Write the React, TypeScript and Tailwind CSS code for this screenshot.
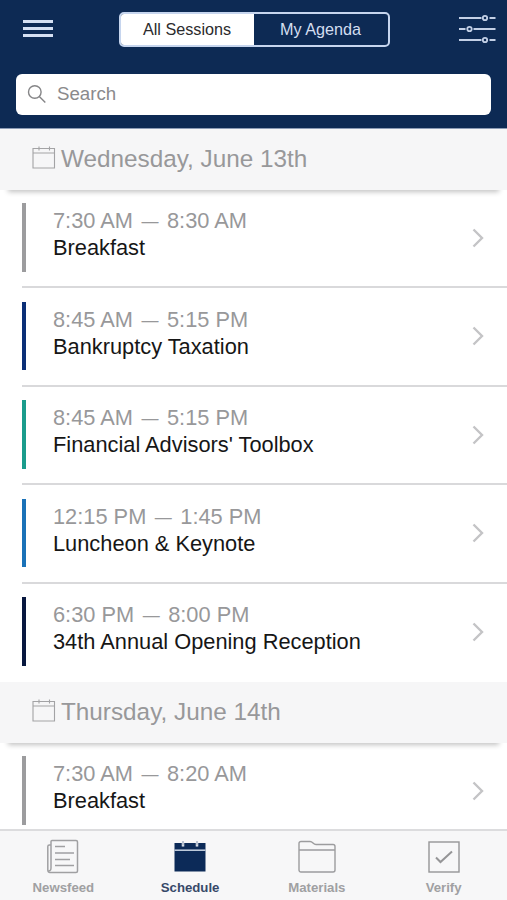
import React from 'react';

type Session = { start: string; end: string; title: string; bar: string };
type Day = { label: string; sessions: Session[] };

const days: Day[] = [
  {
    label: 'Wednesday, June 13th',
    sessions: [
      { start: '7:30 AM', end: '8:30 AM', title: 'Breakfast', bar: 'bg-[#9c9c9e]' },
      { start: '8:45 AM', end: '5:15 PM', title: 'Bankruptcy Taxation', bar: 'bg-[#0b2f77]' },
      { start: '8:45 AM', end: '5:15 PM', title: "Financial Advisors' Toolbox", bar: 'bg-[#1a9c8c]' },
      { start: '12:15 PM', end: '1:45 PM', title: 'Luncheon & Keynote', bar: 'bg-[#1a72b8]' },
      { start: '6:30 PM', end: '8:00 PM', title: '34th Annual Opening Reception', bar: 'bg-[#08183f]' },
    ],
  },
  {
    label: 'Thursday, June 14th',
    sessions: [{ start: '7:30 AM', end: '8:20 AM', title: 'Breakfast', bar: 'bg-[#9c9c9e]' }],
  },
];

const FilterIcon = () => (
  <svg className="w-[38px] h-[30px]" viewBox="0 0 38 30" fill="none" stroke="#c3d0e6" strokeWidth="1.8">
    <path d="M1 4h22.5M31.5 4H37.5M1 15h6.5M15.5 15H37.5M1 26h22.5M31.5 26H37.5" />
    <circle cx="27" cy="4" r="2.2" />
    <circle cx="11.5" cy="15" r="2.2" />
    <circle cx="27" cy="26" r="2.2" />
  </svg>
);

const SearchIcon = () => (
  <svg className="w-5 h-5" viewBox="0 0 20 20" fill="none" stroke="#858587" strokeWidth="1.4">
    <circle cx="7.8" cy="8" r="6.3" />
    <path d="M12.3 12.6l6 5.9" />
  </svg>
);

const CalendarIcon = () => (
  <svg className="w-6 h-6 mb-[5px]" viewBox="0 0 24 24" fill="none" stroke="#a3a3a5" strokeWidth="1.1">
    <path d="M1 3.5h21.5v19.5H1zM1 8h21.5M7 1.5v4M17.5 1.5v4" />
  </svg>
);

const Chevron = () => (
  <svg className="w-3 h-5" viewBox="0 0 12 20" fill="none" stroke="#c4c4c6" strokeWidth="2.4">
    <path d="M1.5 1.5L10 10l-8.500 8.500" />
  </svg>
);

const NewsIcon = () => (
  <svg className="w-8 h-9" viewBox="0 0 32 36" fill="none" stroke="#a0a0a2" strokeWidth="1.5">
    <path d="M5 2.500h24a1.500 1.500 0 0 1 1.500 1.500v29a1.500 1.500 0 0 1-1.500 1.500H3A2.500 2.500 0 0 1 .8 32V8.500A1.500 1.500 0 0 1 2.300 7H4" />
    <path d="M4 30V3.500a1 1 0 0 1 1-1M4 30c0 3-2 3.500-2 2" />
    <path d="M8 8.500h10M8 15h19M8 21.500h15M8 27.500h19" />
  </svg>
);

const ScheduleIcon = () => (
  <svg className="w-8 h-9" viewBox="0 0 32 36" fill="none">
    <path d="M.5 5h31v28.500H.5z" fill="#0c2a58" />
    <path d="M.5 12.200h31" stroke="#c8d2e2" strokeWidth="1.500" />
    <path d="M9 3v5.500M23 3v5.500" stroke="#f0f3f7" strokeWidth="2.500" />
    <path d="M9 3v4.500M23 3v4.500" stroke="#8291ab" strokeWidth="1" />
  </svg>
);

const FolderIcon = () => (
  <svg className="w-[38px] h-9" viewBox="0 0 38 36" fill="none" stroke="#9c9c9e" strokeWidth="1.4">
    <path d="M1 32V5.500a2 2 0 0 1 2-2h9c3 0 3 3 6 3h17a2 2 0 0 1 2 2V32a2 2 0 0 1-2 2H3a2 2 0 0 1-2-2zM1 12h36" />
  </svg>
);

const VerifyIcon = () => (
  <svg className="w-8 h-9" viewBox="0 0 32 36" fill="none" stroke="#959597">
    <rect x="1" y="4" width="30" height="30" strokeWidth="1.4" />
    <path d="M8 19.500l4.500 4.500L24 13.500" strokeWidth="2" />
  </svg>
);

const tabs = [
  { label: 'Newsfeed', Icon: NewsIcon, active: false },
  { label: 'Schedule', Icon: ScheduleIcon, active: true },
  { label: 'Materials', Icon: FolderIcon, active: false },
  { label: 'Verify', Icon: VerifyIcon, active: false },
];

const SessionRow: React.FC<{ session: Session; last: boolean }> = ({ session, last }) => (
  <div className={`ml-[22px] h-[98.5px] flex items-start border-[#d9d9db] ${last ? '' : 'border-b-2'}`}>
    <div className={`w-1 h-[68.5px] mt-[13.5px] shrink-0 ${session.bar}`} />
    <div className="ml-[27px] mt-[17.5px] flex-1 text-[21.8px] leading-[27px] whitespace-nowrap">
      <p className="text-[#98989a]">
        {session.start}
        <span className="inline-block w-[34px] text-center text-[17px] leading-none relative -top-px">—</span>
        {session.end}
      </p>
      <p className="text-[#161616]">{session.title}</p>
    </div>
    <div className="mt-[38px] mr-[23px]">
      <Chevron />
    </div>
  </div>
);

const App: React.FC = () => {
  return (
    <div className="w-full h-[900px] flex flex-col overflow-hidden bg-white font-['Liberation_Sans',Arial,sans-serif]">
      <header className="h-[129px] shrink-0 bg-[#0d2a54] border-b border-[#8c9cb6]">
        <div className="h-[59px] pt-3 pl-[23px] pr-[11px] flex items-start justify-between">
          <button className="mt-2 w-[30px] flex flex-col gap-1">
            <span className="h-[3px] bg-[#d5e0f3]" />
            <span className="h-[3px] bg-[#d5e0f3]" />
            <span className="h-[3px] bg-[#d5e0f3]" />
          </button>
          <div className="-ml-[3px] w-[271px] h-[35px] flex rounded-[5px] border-2 border-[#c6d5ee] overflow-hidden text-[16.2px]">
            <button className="w-[133px] bg-white text-[#2b2b2d]">All Sessions</button>
            <button className="flex-1 text-[#d3def0]">My Agenda</button>
          </div>
          <button className="mt-[2px]">
            <FilterIcon />
          </button>
        </div>
        <div className="mx-4 mt-[14.5px] h-[41px] bg-white rounded-md flex items-center px-[11px] gap-[10px] text-[18.7px] text-[#8a8a8c]">
          <SearchIcon />
          <span>Search</span>
        </div>
      </header>

      <main className="flex-1 min-h-0 overflow-hidden">
        {days.map((day) => (
          <section key={day.label}>
            <h2 className="h-[60.5px] pl-8 flex items-center gap-[5px] bg-[#f6f6f7] text-[24.3px] text-[#98989a] shadow-[0_10px_5px_-8px_rgba(0,0,0,0.24)]">
              <CalendarIcon />
              <span>{day.label}</span>
            </h2>
            {day.sessions.map((session, i) => (
              <SessionRow key={session.title} session={session} last={i === day.sessions.length - 1} />
            ))}
          </section>
        ))}
      </main>

      <nav className="h-[71px] shrink-0 grid grid-cols-4 bg-[#f7f7f8] border-t-2 border-[#dcdcde]">
        {tabs.map(({ label, Icon, active }) => (
          <button
            key={label}
            className={`flex flex-col items-center pt-[7px] text-[13.2px] leading-[16px] font-bold ${
              active ? 'text-[#374969]' : 'text-[#a0a0a2]'
            }`}
          >
            <Icon />
            <span className="mt-[6px]">{label}</span>
          </button>
        ))}
      </nav>
    </div>
  );
};

export default App;
